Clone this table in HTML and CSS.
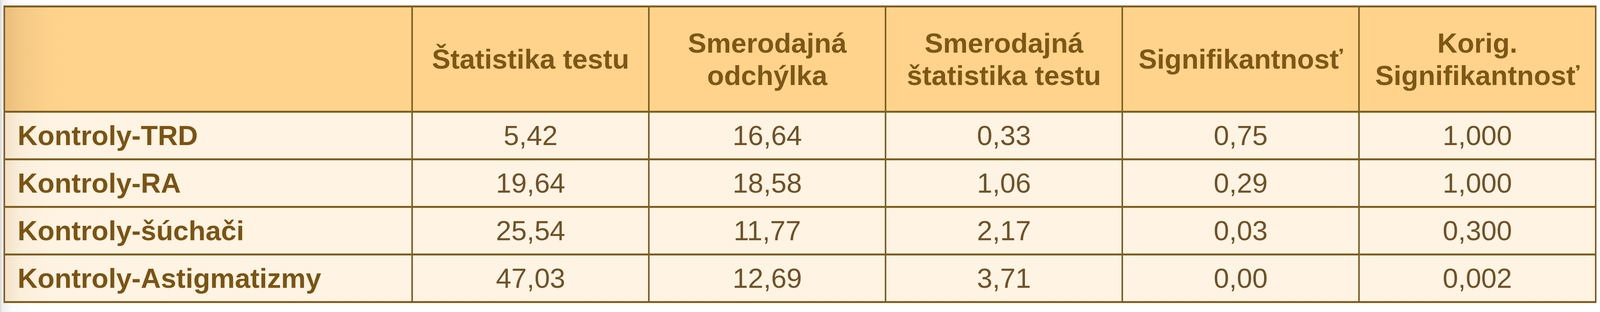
FILE: index.html
```html
<!DOCTYPE html>
<html lang="sk">
<head>
<meta charset="utf-8">
<title>Tabuľka</title>
<link rel="stylesheet" href="styles.css">
</head>
<body>
<div class="page">
  <div class="grid">
    <div class="cell head first"></div>
    <div class="cell head">Štatistika testu</div>
    <div class="cell head">Smerodajná<br>odchýlka</div>
    <div class="cell head">Smerodajná<br>štatistika testu</div>
    <div class="cell head">Signifikantnosť</div>
    <div class="cell head">Korig.<br>Signifikantnosť</div>

    <div class="cell label first">Kontroly-TRD</div>
    <div class="cell num">5,42</div>
    <div class="cell num">16,64</div>
    <div class="cell num">0,33</div>
    <div class="cell num">0,75</div>
    <div class="cell num">1,000</div>

    <div class="cell label first">Kontroly-RA</div>
    <div class="cell num">19,64</div>
    <div class="cell num">18,58</div>
    <div class="cell num">1,06</div>
    <div class="cell num">0,29</div>
    <div class="cell num">1,000</div>

    <div class="cell label first">Kontroly-šúchači</div>
    <div class="cell num">25,54</div>
    <div class="cell num">11,77</div>
    <div class="cell num">2,17</div>
    <div class="cell num">0,03</div>
    <div class="cell num">0,300</div>

    <div class="cell label first">Kontroly-Astigmatizmy</div>
    <div class="cell num">47,03</div>
    <div class="cell num">12,69</div>
    <div class="cell num">3,71</div>
    <div class="cell num">0,00</div>
    <div class="cell num">0,002</div>
  </div>
</div>
</body>
</html>
```

FILE: styles.css
```css
html, body {
  margin: 0;
  padding: 0;
}

body {
  width: 100%;
  height: 800px;
  background: linear-gradient(to right, #d9d9d9 0px, #efefef 6px, #fbfbfb 30px, #ffffff 80px);
  font-family: "Liberation Sans", Arial, sans-serif;
  overflow: hidden;
}

.page {
  padding: 14px 9px 0 9px;
}

.grid {
  width: 100%;
  box-sizing: border-box;
  display: grid;
  grid-template-columns: minmax(0, 1094fr) repeat(5, minmax(0, 633fr));
  grid-template-rows: 265px repeat(4, 117px);
  column-gap: 4px;
  row-gap: 5px;
  padding: 5px 4px;
  background: #7f5f1f;
}

.cell {
  display: flex;
  align-items: center;
  font-size: 71px;
  line-height: 83px;
  white-space: nowrap;
}

.head {
  background: #ffd38c;
  color: #7d5715;
  font-weight: 700;
  justify-content: center;
  text-align: center;
}

.head.first {
  background: linear-gradient(to right, #e9bd7d 0px, #f4c985 40px, #fed28b 120px, #ffd38c 200px);
}

.label {
  background: linear-gradient(to right, #f3e2c8 0px, #fbeedb 40px, #fff3e3 120px);
  color: #7b5413;
  font-weight: 700;
  padding-left: 32px;
}

.num {
  background: #fff3e3;
  color: #6f5227;
  font-weight: 400;
  justify-content: center;
}
```
